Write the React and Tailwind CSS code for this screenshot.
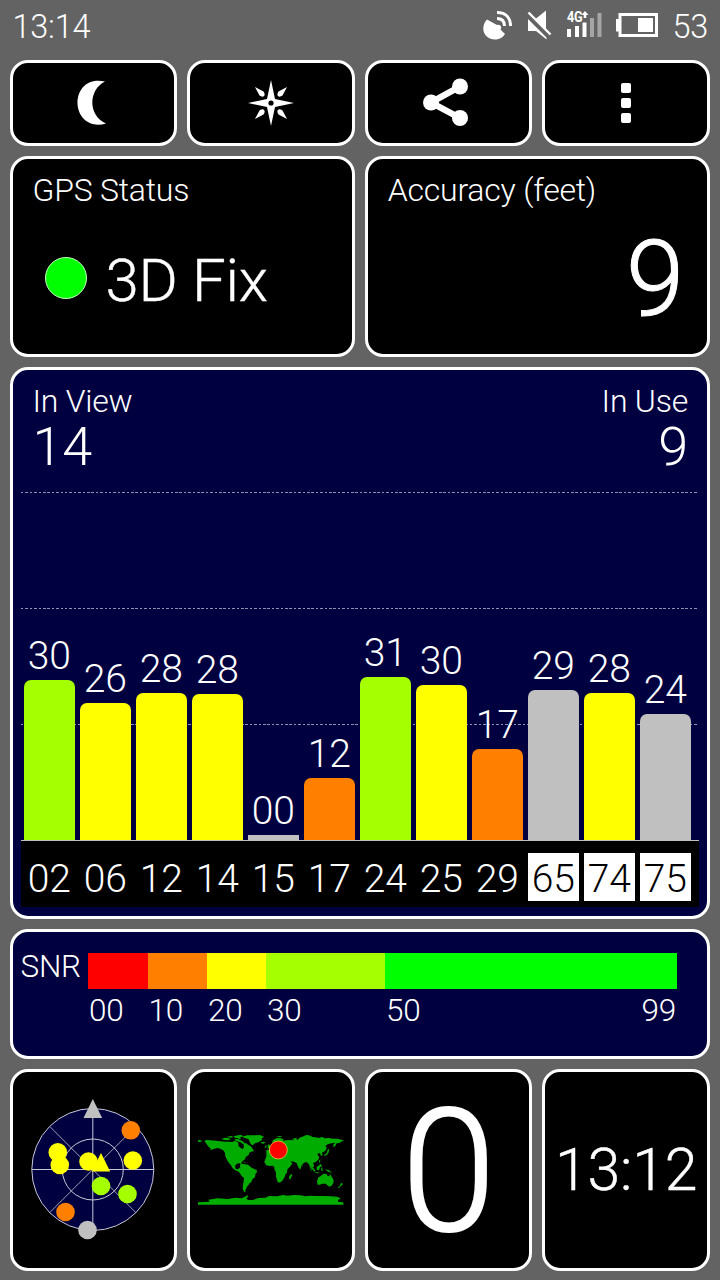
import React from "react";

const satellites = [
  { id: "02", snr: "30", height: 160, color: "bg-[#a6ff00]" },
  { id: "06", snr: "26", height: 137, color: "bg-[#ffff00]" },
  { id: "12", snr: "28", height: 147, color: "bg-[#ffff00]" },
  { id: "14", snr: "28", height: 146, color: "bg-[#ffff00]" },
  { id: "15", snr: "00", height: 5, color: "bg-[#c0c0c0]", flat: true },
  { id: "17", snr: "12", height: 62, color: "bg-[#ff8000]" },
  { id: "24", snr: "31", height: 163, color: "bg-[#a6ff00]" },
  { id: "25", snr: "30", height: 155.5, color: "bg-[#ffff00]" },
  { id: "29", snr: "17", height: 91, color: "bg-[#ff8000]" },
  { id: "65", snr: "29", height: 150, color: "bg-[#c0c0c0]", glonass: true },
  { id: "74", snr: "28", height: 147, color: "bg-[#ffff00]", glonass: true },
  { id: "75", snr: "24", height: 126, color: "bg-[#c0c0c0]", glonass: true },
];

const Card = ({ className = "", children }) => (
  <div className={`rounded-[18px] border-[3px] border-white ${className}`}>
    {children}
  </div>
);

const StatusBar = () => (
  <header className="flex h-[60px] items-start justify-between pl-[3px] pr-[2px]">
    <span className="mt-[7px] text-[32.500px] leading-[40px]">13:14</span>
    <div className="flex items-start">
      {/* Satellite dish */}
      <svg className="mt-[8px]" width="32" height="34" viewBox="482 8 32 34" fill="none">
        <path d="M488 19.500C481 27 484 39 496 39.500C501 39.500 504 37 506 34L501.500 29.500C503.500 27 501 24 498 25Z" fill="#fff" />
        <path d="M498 18.500C503 18.500 505.500 21.500 505.500 26M498 12.500C507 12.500 511.500 18 511.500 26" stroke="#fff" strokeWidth="3" />
      </svg>
      {/* Muted speaker */}
      <svg className="ml-[13px] mt-[8px]" width="28" height="34" viewBox="527 8 28 34">
        <path d="M529 19L547.500 37.500V39.500L537 31H529ZM536.500 19L547 10.500V29.500Z" fill="#fff" />
        <path d="M529.500 12.500L551.500 34.500" stroke="#fff" strokeWidth="2.400" />
      </svg>
      {/* Mobile signal */}
      <svg className="ml-[11px] mt-[8px]" width="38" height="34" viewBox="566 8 38 34">
        <path d="M568 29h4v8h-4zM576 26h4v11h-4zM583.500 22.500h4v14.500h-4z" fill="#fff" />
        <path d="M591 18h4v19h-4zM598.500 13h4v24h-4z" fill="#a5a5a5" />
        <text x="568" y="21.500" fontSize="14" fontWeight="700" textLength="15.500" lengthAdjust="spacingAndGlyphs" fill="#fff">4G</text>
        <path d="M586 11l3.500 4h-2.200v3h-2.600v-3h-2.200z" fill="#fff" />
      </svg>
      {/* Battery */}
      <svg className="ml-[12px] mt-[8px]" width="44" height="34" viewBox="616 8 44 34">
        <path fillRule="evenodd" d="M619.500 13H659V37H619.500V31.500H617V19H619.500ZM622.500 16V34H656V16Z" fill="#fff" />
        <path d="M639 18h15v14h-15z" fill="#fff" />
      </svg>
      <span className="ml-[13px] mt-[7px] text-[32.500px] leading-[40px]">53</span>
    </div>
  </header>
);

const Toolbar = () => (
  <div className="grid h-[86px] shrink-0 grid-cols-4 gap-[10px]">
    <Card className="bg-black flex items-center justify-center">
      <svg width="60" height="60" viewBox="63.500 73 60 60">
        <path d="M105.500 81.500C88 77.500 78 89 78 103C78 117 90 128.500 106.500 123.500C88.500 115.500 88.500 90 105.500 81.500Z" fill="#fff" />
      </svg>
    </Card>
    <Card className="bg-black flex items-center justify-center">
      <svg width="60" height="60" viewBox="-30 -30 60 60" fill="#fff">
        <path d="M0-23L4-4L23 0L4 4L0 23L-4 4L-23 0L-4-4Z" />
        <circle r="5.500" />
        <circle r="2.600" fill="#000" />
        <path id="ray" d="M16-16L11.500-7.500Q8.500-5.500 7-7Q5.500-8.500 7.500-11.500Z" />
        <use href="#ray" transform="rotate(90)" />
        <use href="#ray" transform="rotate(180)" />
        <use href="#ray" transform="rotate(270)" />
      </svg>
    </Card>
    <Card className="bg-black flex items-center justify-center">
      <svg width="60" height="60" viewBox="419 73.500 60 60" fill="#fff">
        <path d="M460 87L431 103L460 118.500" fill="none" stroke="#fff" strokeWidth="6.500" />
        <circle cx="460" cy="87" r="8" />
        <circle cx="431" cy="103" r="8" />
        <circle cx="460" cy="118.500" r="8" />
      </svg>
    </Card>
    <Card className="bg-black flex flex-col items-center justify-center gap-[5px]">
      <i className="size-[10px] rounded-[2px] bg-white"></i>
      <i className="size-[10px] rounded-[2px] bg-white"></i>
      <i className="size-[10px] rounded-[2px] bg-white"></i>
    </Card>
  </div>
);

const SignalChart = () => (
  <Card className="relative flex h-[552px] shrink-0 flex-col bg-[#000040] px-[8px] pb-[9px]">
    {/* Grid lines behind the bars */}
    <div className="absolute left-[8px] right-[8px] top-[122px] h-px bg-[repeating-linear-gradient(90deg,#9090b4_0_2.5px,transparent_2.5px_4.4px)]"></div>
    <div className="absolute left-[8px] right-[8px] top-[238px] h-px bg-[repeating-linear-gradient(90deg,#9090b4_0_2.5px,transparent_2.5px_4.4px)]"></div>
    <div className="absolute left-[8px] right-[8px] top-[354px] h-px bg-[repeating-linear-gradient(90deg,#9090b4_0_2.5px,transparent_2.5px_4.4px)]"></div>

    <div className="flex justify-between pl-[12px] pr-[11px] pt-[10px]">
      <div>
        <p className="text-[32px] leading-[42px]">In View</p>
        <p className="pt-[1px] text-[54px] leading-[48px]">14</p>
      </div>
      <div className="text-right">
        <p className="text-[32px] leading-[42px]">In Use</p>
        <p className="pt-[1px] text-[54px] leading-[48px]">9</p>
      </div>
    </div>

    <div className="relative flex flex-1 items-end gap-[4.500px] border-b border-[#c0c0c0] pl-[3px]">
      {satellites.map((sat) => (
        <div key={sat.id} className="flex w-[51.500px] shrink-0 flex-col items-center">
          <span className="text-[39px] leading-[47px]">{sat.snr}</span>
          <div
            className={`w-full ${sat.flat ? "" : "rounded-t-[7px]"} ${sat.color}`}
            style={{ height: sat.height }}
          ></div>
        </div>
      ))}
    </div>

    <div className="flex h-[66px] items-center gap-[4.500px] bg-black pl-[3px] pb-[6px] pt-[12px]">
      {satellites.map((sat) => (
        <span
          key={sat.id}
          className={`h-[48px] w-[51.500px] shrink-0 text-center text-[39px] leading-[52px] ${
            sat.glonass ? "bg-white text-black" : ""
          }`}
        >
          {sat.id}
        </span>
      ))}
    </div>
  </Card>
);

const SnrLegend = () => (
  <Card className="flex h-[130px] shrink-0 bg-[#000040] pl-[8px] pt-[21px]">
    <span className="w-[67.500px] shrink-0 text-[31.500px] leading-[27px]">SNR</span>
    <div className="w-[589px]">
      <div className="flex h-[36px]">
        <div className="w-[59.500px] bg-[#ff0000]"></div>
        <div className="w-[59.500px] bg-[#ff8000]"></div>
        <div className="w-[59px] bg-[#ffff00]"></div>
        <div className="w-[119px] bg-[#a6ff00]"></div>
        <div className="flex-1 bg-[#00ff00]"></div>
      </div>
      <div className="flex pl-[1px] pr-[1px] pt-[3px] text-[31.500px] leading-[38px]">
        <span className="w-[59.500px]">00</span>
        <span className="w-[59.500px]">10</span>
        <span className="w-[59px]">20</span>
        <span className="w-[119px]">30</span>
        <span className="flex-1">50</span>
        <span>99</span>
      </div>
    </div>
  </Card>
);

const SkyPlot = () => (
  <svg width="140" height="150" viewBox="23.500 1095 140 150">
    <circle cx="93.300" cy="1169.500" r="61" fill="#000040" stroke="#c8c8d8" />
    <g fill="none" stroke="#c8c8d8">
      <circle cx="93.300" cy="1169.500" r="30.500" />
      <path d="M32.300 1169.500H154.300M93.300 1108.500V1230.500" />
      <path d="M50.200 1126.400L136.400 1212.600M136.400 1126.400L50.200 1212.600" strokeWidth=".8" />
    </g>
    <g fill="#ffff00">
      <circle cx="58.300" cy="1152.300" r="9.300" />
      <circle cx="60.300" cy="1165" r="9.300" />
      <circle cx="89" cy="1161.500" r="9.300" />
      <circle cx="133.300" cy="1160.500" r="9.300" />
      <path d="M101.500 1153L110.700 1171.500H92.300Z" />
    </g>
    <g fill="#ff8000">
      <circle cx="131.300" cy="1130.300" r="9.300" />
      <circle cx="66" cy="1212" r="9.300" />
    </g>
    <g fill="#a6ff00">
      <circle cx="101.500" cy="1186" r="9.300" />
      <circle cx="128" cy="1194" r="9.300" />
    </g>
    <g fill="#c0c0c0">
      <circle cx="88" cy="1230" r="9.300" />
      <path d="M93.300 1099L102.700 1118H84Z" />
    </g>
  </svg>
);

// Coordinates are three units to one pixel
const WorldMap = () => (
  <svg width="148" height="76" viewBox="20 38 444 228">
    <g fill="#00ac00">
      {/* North America */}
      <path d="M42 65l6-3 14 1 14 1 14 2 14 1 12 0 10 1 8-4 10 6 0 9 6 6 7 5 4-8-2-9 8-2 8 7 5 1 7 9 4 7-8 2-6 3-2 7-8 5-4 9-6 3-4 6 1 9-6-7-9 1-5 7 2 8 7 2 5-5 4 1-2 7 6 4 2 8 7 1-3 3-9-4-8-8-10-4-8-6-4-8-10-12-4-8-4-8-1-10-5-8-9-5-10-2-12 4-10 3 4-5-6-4z" />
      <path d="M23 62l8 1 5 3-8 2-5-1z" />
      <path d="M93 59l11-4 12 2 5 4-14 2zM108 53l14-3 8 3-8 2zM130 51l12-3 12-1 4 4-12 5-12 0zM132 60l10-1 14 6 8 7-5 3-10-7-12-3zM143 55l10 1-3 3-8-1z" />
      {/* Greenland and Iceland */}
      <path d="M154 52l16-4 22 0 17-1 12 5-6 4-1 7-10 6-10 3-7 6-6-4-4-9-3-6-11-3zM211 69l8-2 6 2-5 4-7-1z" />
      <path d="M143 123l8 1 7 4-7-1zM159 127l9 2-7 1z" />
      {/* South America */}
      <path d="M149 137l6-4 9 2 9 1 8 7 6 4 12 5 1 6-5 7-1 9-7 5-4 9-5 4-4 5-4 5-3 7-3 6 4 4-7-2-4-8 1-12 2-11 1-10-8-7-6-11 3-7z" />
      {/* Africa */}
      <path d="M226 116l7-9 12-3 12-1 3 5 9 2 10-1 6 4 4 9 6 9 10 1-6 10-8 8-1 10-5 6-3 9-7 11-8 4-5-2-5-16 0-13-5-9 0-7-5-4-10 1-9-2-6-9z" />
      <path d="M303 164l3 3-6 13-4-2 1-8z" />
      {/* Europe and Asia */}
      <path d="M228 100l0-8 8-1 0-6 9-5 5-3 1-7-6-1 3-7 12-6 10 0 10 4-2 5 8-2 12-1 12 1 7-6 4 5 7-7 12-4 9-4 12 2 5 4 10 1 11 2 7-2 9 3 12-1 15 2 12 0 14 4 5 2-9 3-3 3-10 2-4 8-6 4 0-8 6-6-11 2-10 2-9 5 4 6-3 8-7 6-4 0 2 9-5 2-3-8-5 0-3 4 6 7-3 8-8 7-8 3 3 7-2 7-7-4-1 5 5 9-5-4-5-16-8-7-7 2-8 9-3 12-6-7-5-13-8-4-11-1 6 6-4 6-11 7-6 1-5-11-5-11-6-1-7-1-3-6-6-2-2 6-6-7-5-2-7 2-5 8z" />
      <path d="M231 80l5-6 4 7 0 5-9 2 2-4zM224 80l5-2-1 6-5 1zM257 52l12-2 7 1-8 3zM304 62l9-6 8-1-9 6zM342 50l8-2 6 3-8 2zM388 55l11-1 2 3-9 0z" />
      <path d="M413 89l4 2-2 8-4 7-9 4-1-3 8-5zM386 122l4 2-1 6-3-3zM387 132l6 4 2 8-5-2zM361 139l8 7 7 9-4 2-9-10zM376 158l13 2-5 2-10-2zM379 143l8-6 3 4-4 12-7-2zM392 146l6-1-3 3 3 7-5-1zM404 149l12 4 9 7-7-1-7-3zM334 136l3 3-2 4z" />
      {/* Australia and New Zealand */}
      <path d="M383 175l8-5 5-4 5-3 8 1 2 5 6 2 2-8 4 8 6 9 1 9-6 10-8 2-5-3-5-5-9 0-9 3-6 0-2-9zM414 199l6 0-3 5zM452 190l6 4-4 4-8 8-4-1 7-6z" />
      {/* Antarctica */}
      <path d="M23 249L58 247L54 241L82 237L112 239L136 235L154 237L164 232L171 228L174 230L168 238L174 242L187 242L205 236L225 235L236 230L260 231L278 227L292 229L310 227L330 228L345 231L360 229L378 230L402 230L422 231L440 232L451 237L443 243L443 247L459 249L459 256L23 256Z" />
    </g>
    <circle cx="264" cy="92" r="27" fill="#ff0000" stroke="#e8c040" strokeWidth="2.500" />
  </svg>
);

const App = () => (
  <main className="flex h-[1280px] w-[720px] flex-col gap-[10px] overflow-hidden bg-[#636363] pl-[9.500px] pr-[10px] font-['Roboto',sans-serif] font-light tracking-[-0.014em] text-white">
    <div className="-mb-[10px] shrink-0">
      <StatusBar />
    </div>
    <Toolbar />

    <div className="grid h-[201px] shrink-0 grid-cols-2 gap-[10px]">
      <Card className="bg-black px-[20px] pt-[10px]">
        <h2 className="text-[32px] leading-[42px]">GPS Status</h2>
        <div className="mt-[36px] flex items-start gap-[19px] pl-[12px]">
          <span className="mt-[10px] size-[42px] rounded-full border-[1.500px] border-[#c0ffc0] bg-[#00ff00]"></span>
          <span className="pt-[2px] text-[60px] leading-[64px] [-webkit-text-stroke:0.4px_white]">3D Fix</span>
        </div>
      </Card>
      <Card className="bg-black px-[20px] pt-[10px]">
        <h2 className="text-[32px] leading-[42px]">Accuracy (feet)</h2>
        <p className="mt-[14px] pr-[3px] text-right text-[105px] leading-[110px] [-webkit-text-stroke:1px_white]">9</p>
      </Card>
    </div>

    <SignalChart />
    <SnrLegend />

    <div className="grid h-[202px] shrink-0 grid-cols-4 gap-[10px]">
      <Card className="flex items-center justify-center bg-black">
        <SkyPlot />
      </Card>
      <Card className="flex items-center justify-center bg-black">
        <WorldMap />
      </Card>
      <Card className="flex items-center justify-center bg-black">
        <span className="pt-[4px] text-[170px] leading-[190px] [-webkit-text-stroke:2px_white]">0</span>
      </Card>
      <Card className="flex items-center justify-center bg-black">
        <span className="text-[59px] leading-[70px] [-webkit-text-stroke:0.4px_white]">13:12</span>
      </Card>
    </div>
  </main>
);

export default App;
